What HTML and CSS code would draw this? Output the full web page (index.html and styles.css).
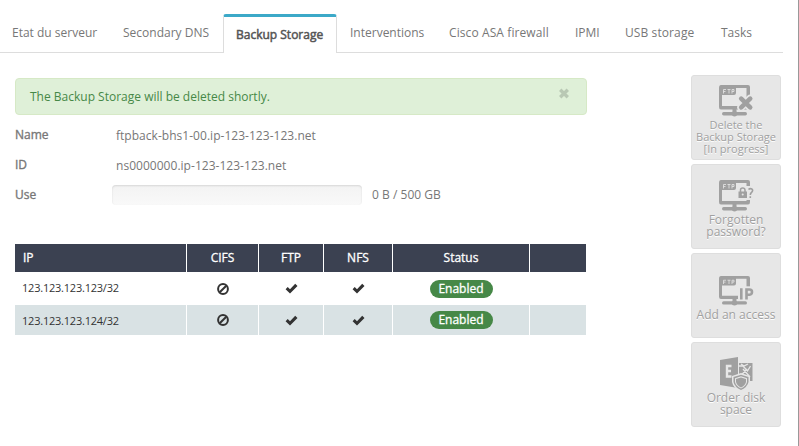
FILE: index.html
```html
<!DOCTYPE html>
<html lang="en">
<head>
<meta charset="utf-8">
<title>Backup Storage</title>
<link rel="stylesheet" href="styles.css">
</head>
<body>
<svg class="defs" width="0" height="0" aria-hidden="true">
  <symbol id="check" viewBox="0 0 13 11"><path d="M0.6 6.2 2.7 4.1 5 6.2 10.2 0.8 12.5 3 5 10.4Z"/></symbol>
  <symbol id="ban" viewBox="0 0 12 12"><circle cx="6" cy="6" r="4.9" fill="none" stroke="currentColor" stroke-width="2"/><path d="M2.7 9.3 9.3 2.7" stroke="currentColor" stroke-width="2"/></symbol>
  <symbol id="ftp" viewBox="0 0 36 32">
    <path d="M3 0H30Q32 0 32 2V22Q32 24.500 30 24.500H3Q1 24.500 1 22V3Q1 0 3 0ZM18 3V8Q18 10 16 10H4V21H28.500V3Z" fill-rule="evenodd"/>
    <rect x="14.500" y="24" width="4" height="4"/>
    <rect x="4" y="27" width="25" height="3.500" rx="1.700"/>
    <circle cx="16.500" cy="28.700" r="2.700"/>
    <path d="M5.500 8.500V4.500H8M5.500 6.500H7.500M9.500 4.500H12.500M11 4.500V8.500M14 8.500V4.500H16V6.500H14" fill="none" stroke="#e7e7e7" stroke-width="0.8"/>
  </symbol>
</svg>
<div class="page">
  <nav class="tabs">
    <a class="tab t1">Etat du serveur</a>
    <a class="tab t2">Secondary DNS</a>
    <a class="tab t3 active">Backup Storage</a>
    <a class="tab t4">Interventions</a>
    <a class="tab t5">Cisco ASA firewall</a>
    <a class="tab t6">IPMI</a>
    <a class="tab t7">USB storage</a>
    <a class="tab t8">Tasks</a>
  </nav>
  <div class="content">
    <main>
      <div class="alert"><span>The Backup Storage will be deleted shortly.</span>
        <svg class="close" width="12" height="11" viewBox="0 0 12 11"><path d="M2.200 1.800 9.800 9.200M9.800 1.800 2.200 9.200" stroke="currentColor" stroke-width="3.400"/></svg>
      </div>
      <dl class="info">
        <dt>Name</dt><dd>ftpback-bhs1-00.ip-123-123-123.net</dd>
        <dt>ID</dt><dd>ns0000000.ip-123-123-123.net</dd>
        <dt>Use</dt><dd class="usage"><span class="bar"></span><span class="amount">0 B / 500 GB</span></dd>
      </dl>
      <table>
        <colgroup><col class="c1"><col class="c2"><col class="c3"><col class="c4"><col class="c5"><col class="c6"></colgroup>
        <thead><tr><th class="ip">IP</th><th>CIFS</th><th>FTP</th><th>NFS</th><th>Status</th><th></th></tr></thead>
        <tbody>
          <tr class="r1"><td class="ip">123.123.123.123/32</td><td><svg width="12" height="12"><use href="#ban"/></svg></td><td><svg width="13" height="11"><use href="#check"/></svg></td><td><svg width="13" height="11"><use href="#check"/></svg></td><td><span class="badge">Enabled</span></td><td></td></tr>
          <tr class="r2"><td class="ip">123.123.123.124/32</td><td><svg width="12" height="12"><use href="#ban"/></svg></td><td><svg width="13" height="11"><use href="#check"/></svg></td><td><svg width="13" height="11"><use href="#check"/></svg></td><td><span class="badge">Enabled</span></td><td></td></tr>
        </tbody>
      </table>
    </main>
    <aside>
      <a class="action a1">
        <svg width="36" height="32" viewBox="0 0 36 32"><use href="#ftp" width="36" height="32"/><path d="M23 13.500 32 22.500M32 13.500 23 22.500" stroke="#e7e7e7" stroke-width="7.500" stroke-linecap="round"/><path d="M23.200 13.700 32.200 22.300M32.200 13.700 23.200 22.300" stroke="currentColor" stroke-width="4.600" stroke-linecap="round"/></svg>
        <span>Delete the<br>Backup Storage<br>[In progress]</span></a>
      <a class="action a2">
        <svg width="36" height="32" viewBox="0 0 36 32"><use href="#ftp" width="36" height="32"/><path d="M19 6H36V20H19Z" fill="#e7e7e7"/><rect x="20.500" y="11.500" width="8.500" height="6.500"/><path d="M22.500 12V10Q22.500 8 24.700 8T27 10V12" fill="none" stroke="currentColor" stroke-width="1.500"/><circle cx="24.700" cy="14.500" r="1" fill="#e7e7e7"/><path d="M30.500 9.500Q32 8 33.800 9T33.500 12.500Q32.300 13.300 32.300 15M32.300 16.200V18" fill="none" stroke="currentColor" stroke-width="1.600"/></svg>
        <span>Forgotten<br>password?</span></a>
      <a class="action a3">
        <svg width="36" height="30" viewBox="0 0 36 32" preserveAspectRatio="none"><use href="#ftp" width="36" height="32"/><path d="M20 11H36V26H20Z" fill="#e7e7e7"/><path d="M23.300 13V25M28.500 25V14.300H31.500Q34 14.300 34 17T31.500 20H29" fill="none" stroke="currentColor" stroke-width="2.600"/></svg>
        <span>Add an access</span></a>
      <a class="action a4">
        <svg width="34" height="36" viewBox="0 0 34 36"><path d="M1 4 19 1V32L1 29Z"/><path d="M12.500 10H8V20.500H12.500M8 15H12" fill="none" stroke="#e7e7e7" stroke-width="2.400"/><path d="M20 7H33.500V25H20Z"/><path d="M20 10H24L28.500 15 31.500 10M21 20.500 28 13M24 13 31 21M22 8 25 10 29 8" fill="none" stroke="#e7e7e7" stroke-width="1.300"/><path d="M13 20 22 17 31 20V26Q30 32 22 35.500 14 32 13 26Z" fill="#e7e7e7"/><path d="M14.500 21 22 18.700 29.500 21V26Q28.500 31 22 34 15.500 31 14.500 26Z"/><path d="M16 22.200 22 20.300 28 22.200V26Q27 30 22 32.500 17 30 16 26Z" fill="#e7e7e7"/><path d="M17 23 22 21.500 27 23V26Q26 29.500 22 31.500 18 29.500 17 26Z"/></svg>
        <span>Order disk<br>space</span></a>
    </aside>
  </div>
</div>
</body>
</html>
```
FILE: styles.css
```css
* { box-sizing: border-box; }
body { margin: 0; background: #fff; color: #777; font: 12px/18px "Open Sans", "Liberation Sans", sans-serif; }
.defs { display: block; height: 0; }
svg { display: block; fill: currentColor; }
.page { width: 799px; height: 446px; overflow: hidden; border-right: 1px solid #999; }
.tabs { display: flex; width: 783px; height: 53px; padding-top: 14px; border-bottom: 1px solid #ddd; }
.tab { padding: 10px 0 0 13px; white-space: nowrap; flex: none; }
.t1 { width: 110px; padding-left: 12px; }
.t2 { width: 113px; }
.t3 { width: 114px; }
.t4 { width: 99px; }
.t5 { width: 126px; letter-spacing: .1px; }
.t6 { width: 50px; }
.t7 { width: 96px; letter-spacing: .1px; }
.t8 { width: 60px; }
.active { height: 39px; padding: 9px 0 0 12px; border: 1px solid #ddd; border-top: 3px solid #3ca9c8; border-bottom: 0; border-radius: 3px 3px 0 0; background: #fff; color: #555; -webkit-text-stroke: .5px; }
.content { display: flex; justify-content: space-between; padding: 22px 17px 0 15px; }
main { width: 572px; padding-top: 3px; }
.alert { display: flex; justify-content: space-between; height: 37px; padding: 9px 16px 0 14px; border: 1px solid #d6e9c6; border-radius: 4px; background: #dff0d8; color: #468847; }
.close { color: #b9c8b4; }
.info { display: grid; grid-template-columns: 101px 1fr; grid-auto-rows: 30px; margin: 10px 0 0; }
dt { padding-top: 1px; -webkit-text-stroke: .35px; }
dd { margin: 0; padding-top: 2px; letter-spacing: .03px; }
.usage { display: flex; gap: 10px; margin-left: -4px; padding-top: 0; }
.bar { width: 250px; height: 20px; border-radius: 4px; background: linear-gradient(#f3f3f3, #f9f9f9); box-shadow: inset 0 1px 2px rgba(0, 0, 0, .12); }
.amount { padding-top: 1px; }
table { width: 571px; margin-top: 29px; border-collapse: separate; border-spacing: 0; table-layout: fixed; color: #333; }
.c1 { width: 171px; }
.c2 { width: 72px; }
.c3 { width: 65px; }
.c4 { width: 69px; }
.c5 { width: 137px; }
.c6 { width: 57px; }
th, td { padding: 0; text-align: center; }
th + th, td + td { border-left: 1px solid #fff; }
th { height: 28px; background: #3b4151; color: #fff; font-weight: 400; -webkit-text-stroke: .3px; }
th.ip, td.ip { padding-left: 8px; text-align: left; }
td.ip { padding-left: 7px; font-size: 11px; letter-spacing: -.22px; }
.r1 td.ip { padding-bottom: 1px; }
.r2 td.ip { padding-top: 2px; }
td svg { margin: 0 auto; }
.r1 { height: 33px; }
.r2 { height: 30px; }
.r2 td { background-color: #d9e2e4; }
.badge { display: block; width: 63px; height: 18px; margin: 0 auto; border-radius: 9px; background: #468847; color: #fff; line-height: 17px; -webkit-text-stroke: .3px; }
aside { display: flex; flex-direction: column; gap: 4px; width: 90px; }
.action { display: flex; flex-direction: column; align-items: center; height: 85px; border: 1px solid #dedede; border-radius: 3px; background: #e7e7e7; color: #a0a0a0; line-height: 12px; text-align: center; text-shadow: 0 1px 0 #fff; white-space: nowrap; }
.action span { padding-top: 2px; }
.a1 { padding-top: 9px; font-size: 11px; }
.a2 { padding-top: 15px; }
.a3 { padding-top: 22px; }
.a3 span { padding-top: 3px; }
.a4 { padding-top: 13px; }
.a4 span { padding-top: 0; }
```
